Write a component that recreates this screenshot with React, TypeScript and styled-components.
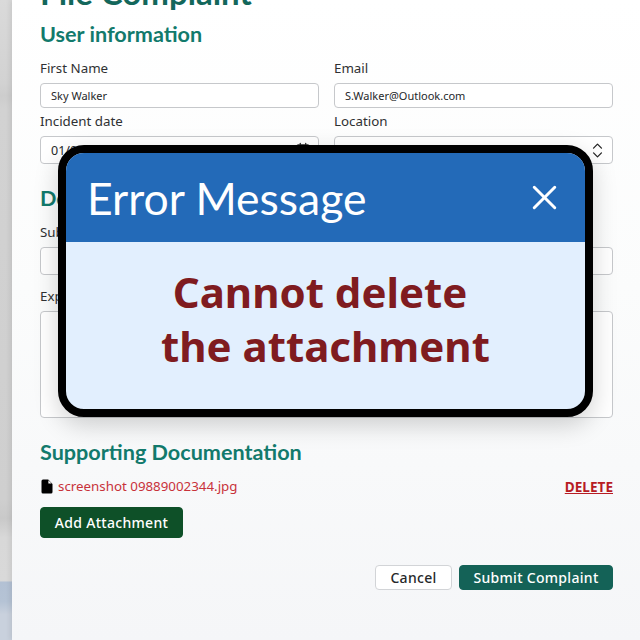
import React from "react";
import styled, { createGlobalStyle } from "styled-components";
import { Calendar, ChevronsUpDown, X } from "lucide-react";

const GlobalStyle = createGlobalStyle`
  html, body {
    margin: 0;
    height: 640px;
    overflow: hidden;
    background: #d4d4d6;
  }
  body {
    font-family: "Noto Sans", "Open Sans", sans-serif;
  }
`;

const Backdrop = styled.div`
  position: relative;
  width: 640px;
  height: 640px;
  overflow: hidden;
  padding-left: 12px;
  box-sizing: border-box;
  background: linear-gradient(
    180deg,
    #dadada 0,
    #d2d2d2 13%,
    #cdcdcd 15%,
    #d2d2d2 17%,
    #cfcfcf 78%,
    #c9c9c9 81%,
    #d8d8d8 84%,
    #d9d9d9 90.7%,
    #b3c1d4 91%,
    #b5c3d5 94%,
    #c9d1dd 96%,
    #c9d1dd 100%
  );
`;

const Sheet = styled.form`
  box-sizing: border-box;
  height: 640px;
  padding: 0 27px 0 28px;
  background: linear-gradient(180deg, #ffffff 0, #fbfcfc 45%, #f5f6f8 100%);
  box-shadow: -2px 0 5px rgba(0, 0, 0, 0.08);
  overflow: hidden;
`;

const Title = styled.h1`
  margin: -26px 0 0;
  height: 37px;
  font-family: Lato, sans-serif;
  font-size: 33px;
  line-height: 37px;
  font-weight: 700;
  color: #13675b;
`;

const SectionTitle = styled.h2<{ $top: number }>`
  margin: ${p => p.$top}px 0 0;
  font-family: Lato, sans-serif;
  font-size: 21.6px;
  line-height: 28px;
  font-weight: 700;
  color: #127a6c;
`;

const FieldGrid = styled.div`
  display: grid;
  grid-template-columns: 279px 279px;
  column-gap: 15px;
  margin-top: 10px;
`;

const Field = styled.div<{ $wide?: boolean }>`
  grid-column: ${p => (p.$wide ? "1 / -1" : "auto")};
`;

const Label = styled.label`
  display: block;
  height: 25px;
  font-size: 13.33px;
  line-height: 20px;
  color: #2f3133;
`;

const Input = styled.div<{ $h?: number; $after?: number }>`
  box-sizing: border-box;
  height: ${p => p.$h ?? 25}px;
  margin-bottom: ${p => p.$after ?? 3}px;
  padding-left: 10px;
  display: flex;
  align-items: center;
  justify-content: space-between;
  background: #fff;
  border: 1px solid #c6c8cb;
  border-radius: 4px;
  font-size: 11px;
  color: #26282a;
`;

const DateText = styled.span`
  font-size: 12.5px;
`;

const SelectIcon = styled.span<{ $right: number }>`
  display: flex;
  padding-right: ${p => p.$right}px;
  color: #222;
`;

const FileRow = styled.div`
  display: flex;
  align-items: center;
  justify-content: space-between;
  margin-top: 8px;
  height: 24px;
`;

const FileName = styled.a`
  display: flex;
  align-items: center;
  gap: 5px;
  padding-left: 1px;
  font-size: 13.33px;
  color: #c8323a;
`;

const DeleteLink = styled.a`
  font-size: 13.6px;
  font-weight: 700;
  color: #b71c24;
  text-decoration: underline;
`;

const Button = styled.button<{ $bg: string; $fg: string; $line: string }>`
  box-sizing: border-box;
  padding: 0;
  font-family: inherit;
  font-size: 14px;
  font-weight: 500;
  letter-spacing: 0.3px;
  border-radius: 4px;
  background: ${p => p.$bg};
  color: ${p => p.$fg};
  border: 1px solid ${p => p.$line};
`;

const AddButton = styled(Button)`
  display: block;
  width: 143px;
  height: 31px;
  margin-top: 9px;
`;

const Actions = styled.div`
  display: flex;
  justify-content: flex-end;
  gap: 7px;
  margin-top: 27px;
`;

const CancelButton = styled(Button)`
  width: 77px;
  height: 25px;
`;

const SubmitButton = styled(Button)`
  width: 154px;
  height: 25px;
`;

const Modal = styled.div`
  position: absolute;
  left: 58px;
  top: 145px;
  width: 535px;
  height: 272px;
  box-sizing: border-box;
  display: flex;
  flex-direction: column;
  border: 8px solid #000;
  border-radius: 26px;
  overflow: hidden;
  background: #e2effe;
  box-shadow: 0 8px 24px rgba(0, 0, 0, 0.18);
`;

const ModalHeader = styled.div`
  height: 89px;
  flex: none;
  display: flex;
  align-items: center;
  justify-content: space-between;
  box-sizing: border-box;
  padding: 0 20px 0 21px;
  background: #236ab8;
  color: #fff;
`;

const ModalTitle = styled.h3`
  margin: 0;
  font-family: Lato, sans-serif;
  font-size: 44.5px;
  font-weight: 400;
  line-height: 54px;
`;

const ModalBody = styled.p`
  flex: 1;
  margin: 0;
  padding-top: 23px;
  text-align: center;
  font-size: 42px;
  line-height: 54px;
  font-weight: 700;
  color: #7f1b20;
`;

const FileGlyph = () => (
  <svg width="12" height="15" viewBox="0 0 12 15">
    <path d="M2 0.5h5.2L11.5 5v8a1.5 1.5 0 0 1-1.5 1.5H2A1.5 1.5 0 0 1 0.5 13V2A1.5 1.5 0 0 1 2 0.5z" fill="#000" />
    <path d="M7.4 1.2v3.2h3.2z" fill="#fff" />
  </svg>
);

const App: React.FC = () => {
  return (
    <>
      <GlobalStyle />
      <Backdrop>
        <Sheet>
          <Title>File Complaint</Title>
          <SectionTitle $top={9}>User information</SectionTitle>
          <FieldGrid>
            <Field>
              <Label>First Name</Label>
              <Input>Sky Walker</Input>
            </Field>
            <Field>
              <Label>Email</Label>
              <Input>S.Walker@Outlook.com</Input>
            </Field>
            <Field>
              <Label>Incident date</Label>
              <Input $h={28}>
                <DateText>01/01/2024</DateText>
                <SelectIcon $right={7}>
                  <Calendar size={16} strokeWidth={1.6} />
                </SelectIcon>
              </Input>
            </Field>
            <Field>
              <Label>Location</Label>
              <Input $h={28}>
                <span />
                <SelectIcon $right={5}>
                  <ChevronsUpDown size={19} strokeWidth={1.6} />
                </SelectIcon>
              </Input>
            </Field>
          </FieldGrid>
          <SectionTitle $top={17}>Details</SectionTitle>
          <FieldGrid>
            <Field $wide>
              <Label>Subject</Label>
              <Input $h={28} $after={11} />
            </Field>
            <Field $wide>
              <Label>Explanation</Label>
              <Input $h={107} />
            </Field>
          </FieldGrid>
          <SectionTitle $top={17}>Supporting Documentation</SectionTitle>
          <FileRow>
            <FileName>
              <FileGlyph />
              screenshot 09889002344.jpg
            </FileName>
            <DeleteLink>DELETE</DeleteLink>
          </FileRow>
          <AddButton type="button" $bg="#0e5028" $fg="#fff" $line="#0e5028">
            Add Attachment
          </AddButton>
          <Actions>
            <CancelButton type="button" $bg="#fff" $fg="#26282a" $line="#d2d4d7">
              Cancel
            </CancelButton>
            <SubmitButton type="button" $bg="#146257" $fg="#fff" $line="#146257">
              Submit Complaint
            </SubmitButton>
          </Actions>
        </Sheet>
        <Modal>
          <ModalHeader>
            <ModalTitle>Error Message</ModalTitle>
            <X size={41} strokeWidth={1.75} />
          </ModalHeader>
          <ModalBody>
            Cannot delete{"\u00a0"}
            <br />
            the attachment
          </ModalBody>
        </Modal>
      </Backdrop>
    </>
  );
};

export default App;
